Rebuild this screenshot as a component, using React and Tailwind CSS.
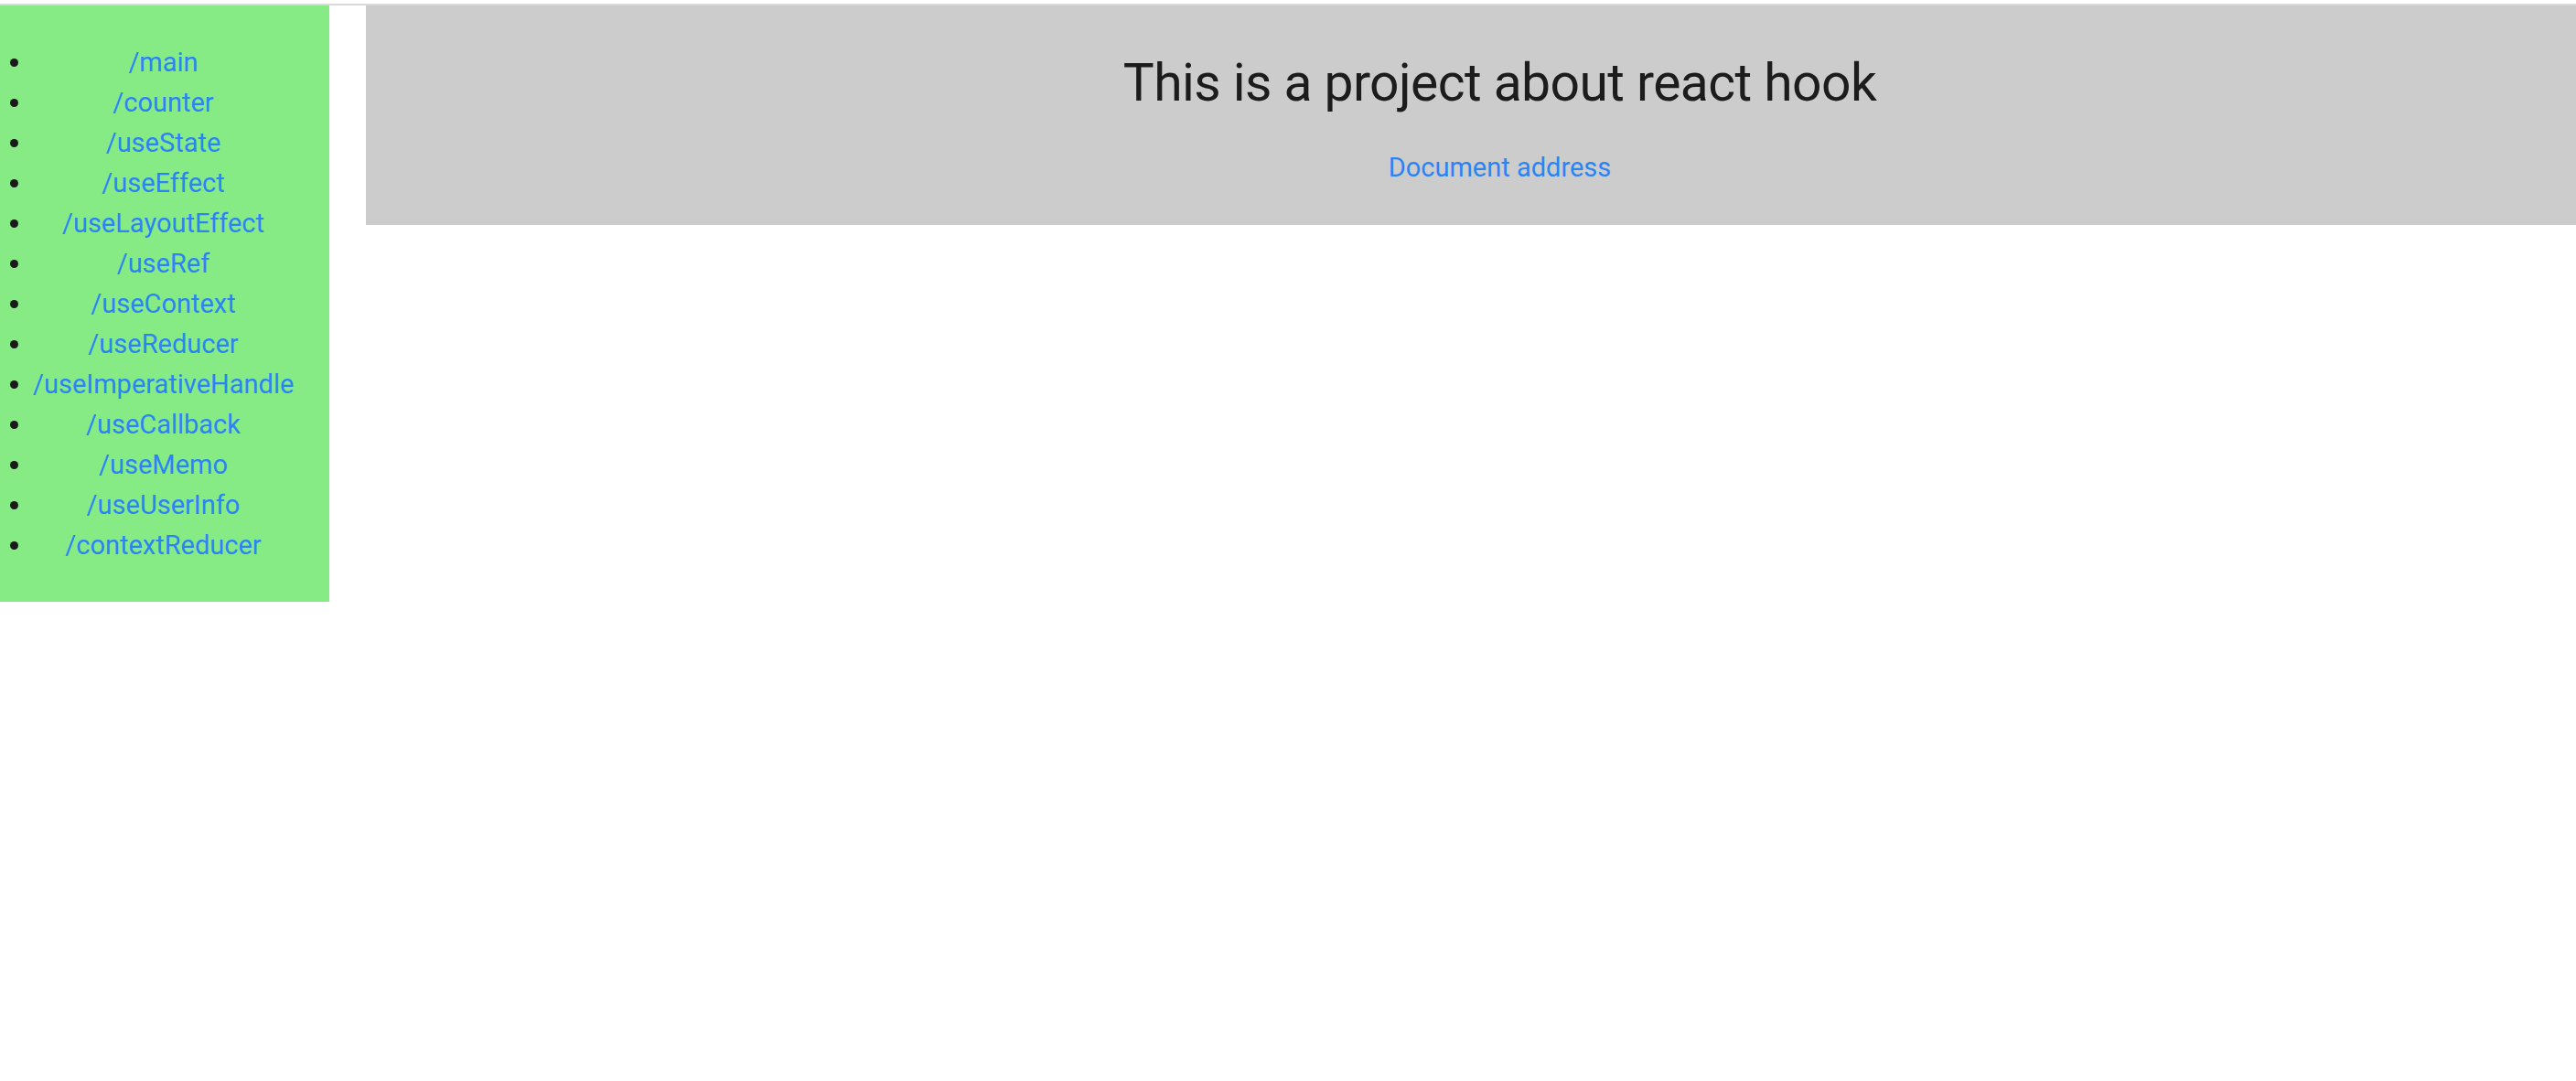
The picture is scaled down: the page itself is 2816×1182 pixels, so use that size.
const routes = [
  '/main',
  '/counter',
  '/useState',
  '/useEffect',
  '/useLayoutEffect',
  '/useRef',
  '/useContext',
  '/useReducer',
  '/useImperativeHandle',
  '/useCallback',
  '/useMemo',
  '/useUserInfo',
  '/contextReducer',
]

export default function App() {
  return (
    <div className="min-h-screen bg-white pt-[4px]" style={{ fontFamily: 'Roboto, "Noto Sans", sans-serif' }}>
      <div className="flex items-start border-t-2 border-[#d9d9d9]">
        {/* Sidebar nav */}
        <nav className="w-[360px] shrink-0 bg-[#87eb85] pt-[40px] pb-[40px]">
          <ul className="list-disc pl-[36px] pr-[39px] marker:text-[#1a1a1a]">
            {routes.map(r => (
              <li key={r} className="text-center text-[29px] leading-[44px]">
                <a href="#" className="text-[#2a84f6]">{r}</a>
              </li>
            ))}
          </ul>
        </nav>

        {/* Header */}
        <header className="ml-[40px] flex-1 bg-[#cccccc] pl-[63px] pt-[51px] pb-[41px] text-center">
          <h1 className="text-[57px] leading-[67px] tracking-[-0.01em] text-[#1c1c1c] font-normal">
            This is a project about react hook
          </h1>
          <div className="mt-[37px] text-[29px] leading-[44px]">
            <a href="#" className="text-[#2a84f6]">Document address</a>
          </div>
        </header>
      </div>
    </div>
  )
}
